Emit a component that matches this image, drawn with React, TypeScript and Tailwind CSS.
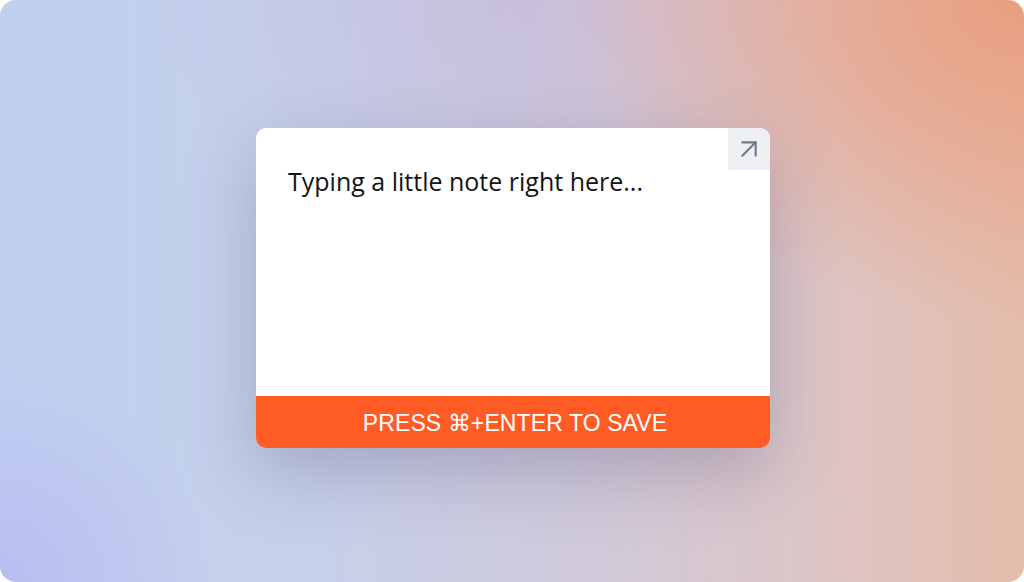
import { ArrowUpRight } from "lucide-react";

export default function App() {
  return (
    <div className="w-[1024px] h-[582px] bg-white">
      <div className="w-full h-full rounded-2xl flex items-center justify-center bg-[radial-gradient(ellipse_45%_55%_at_100%_0%,#e99f80_0%,rgba(233,159,128,0)_100%),radial-gradient(circle_at_0%_100%,#b9bdf2_0%,rgba(185,189,242,0)_18%),radial-gradient(ellipse_35%_45%_at_50%_0%,rgba(190,170,215,0.35)_0%,rgba(190,170,215,0)_100%),linear-gradient(90deg,#c0d0f0_0%,#c6d0ea_30%,#cfcadc_55%,#dcc6c8_78%,#e4bcab_100%)]">
        <div className="w-[514px] h-[320px] mb-[6px] ml-[2px] rounded-[10px] bg-white overflow-hidden flex flex-col shadow-[0_24px_70px_rgba(70,60,100,0.28)]">
          <div className="flex-1 relative">
            <p className="pl-8 pt-[38px] text-[25px] leading-[30px] text-[#141414] font-['Open_Sans',sans-serif]">
              Typing a little note right here...
            </p>
            <div className="absolute top-0 right-0 w-[42px] h-[42px] bg-[#eef0f4] flex items-center justify-center">
              <ArrowUpRight className="w-[32px] h-[32px] text-[#6f7b92]" strokeWidth={1.6} />
            </div>
          </div>
          <div className="h-[52px] pt-[3px] bg-[#ff5b24] flex items-center justify-center">
            <span className="text-white text-[23px] tracking-[0.1px] ml-[4px] font-['Liberation_Sans',Arial,sans-serif]">
              PRESS ⌘+ENTER TO SAVE
            </span>
          </div>
        </div>
      </div>
    </div>
  );
}
